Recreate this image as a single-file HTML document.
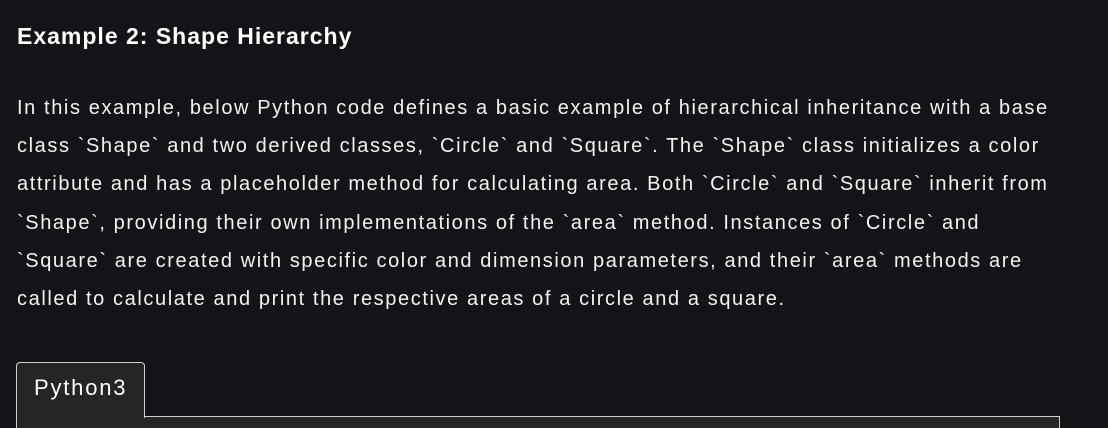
<!DOCTYPE html>
<html><head><style>
html,body{margin:0;padding:0;background:#131417;width:1108px;height:428px;overflow:hidden;}
body{font-family:"Liberation Sans",sans-serif;color:#fff;position:relative;}
h2{position:absolute;left:17px;top:21px;margin:0;font-size:23px;letter-spacing:1px;font-weight:bold;line-height:30px;}
.p{position:absolute;left:17px;top:89px;font-size:20px;letter-spacing:1.6px;line-height:38.2px;white-space:nowrap;color:#f2f2f2;}
.box{position:absolute;left:16px;top:416px;width:1042px;height:30px;border:1px solid #d0d0d0;background:#252523;}
.tab{position:absolute;left:16px;top:362px;width:127px;height:55px;border:1px solid #d0d0d0;border-bottom:none;border-radius:4px 4px 0 0;background:#252523;z-index:2;}
.tab span{position:absolute;left:17px;top:12px;font-size:22px;letter-spacing:1.8px;color:#fff;}
</style></head><body>
<h2>Example 2: Shape Hierarchy</h2>
<div class="p">In this example, below Python code defines a basic example of hierarchical inheritance with a base<br>class `Shape` and two derived classes, `Circle` and `Square`. The `Shape` class initializes a color<br>attribute and has a placeholder method for calculating area. Both `Circle` and `Square` inherit from<br>`Shape`, providing their own implementations of the `area` method. Instances of `Circle` and<br>`Square` are created with specific color and dimension parameters, and their `area` methods are<br>called to calculate and print the respective areas of a circle and a square.</div>
<div class="box"></div>
<div class="tab"><span>Python3</span></div>
</body></html>
